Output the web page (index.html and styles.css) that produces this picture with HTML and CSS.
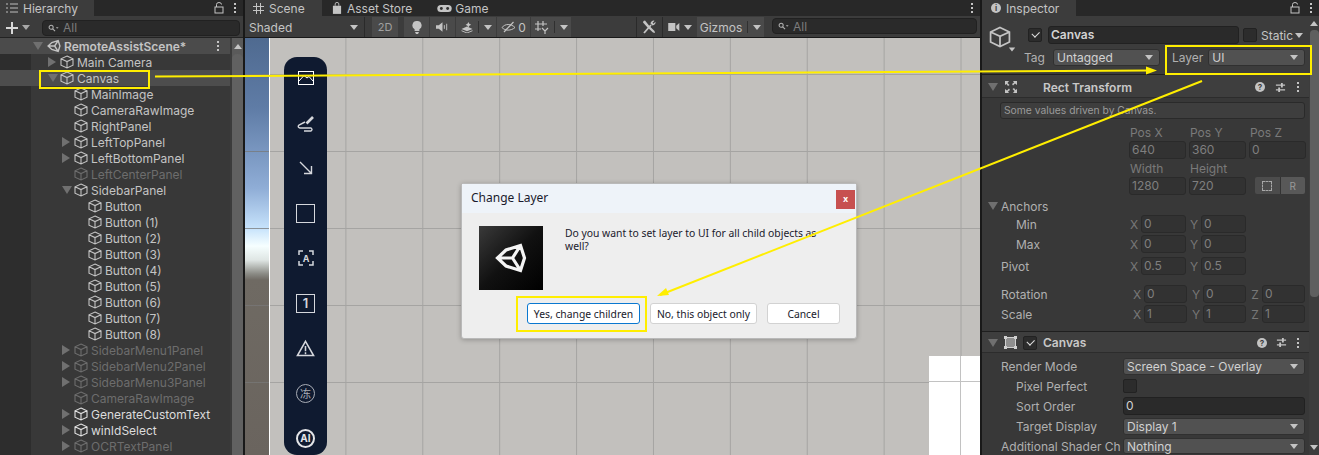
FILE: index.html
```html
<!DOCTYPE html>
<html lang="en">
<head>
    <meta charset="UTF-8">
    <title>Unity Editor - Change Layer</title>
    <link rel="stylesheet" href="styles.css">
</head>
<body>
    <svg width="0" height="0" class="defs">
        <symbol id="cube" viewBox="0 0 14 14">
            <path d="M7 1 L13 3.8 V10.2 L7 13 L1 10.2 V3.8 Z M1 3.8 L7 6.6 L13 3.8 M7 6.6 V13" fill="none" stroke="currentColor" stroke-width="1.1"/>
        </symbol>
        <symbol id="unity" viewBox="0 0 32 32">
            <path d="M2.5 16 L11 8 L25.5 3.5 L29.5 16 L25.5 28.5 L11 24 Z M2.5 16 H17.5 L25.5 3.5 M17.5 16 L25.5 28.5" fill="none" stroke="currentColor" stroke-width="3.2" stroke-linejoin="miter"/>
        </symbol>
        <symbol id="sliders" viewBox="0 0 12 12">
            <path d="M1 3.5 H11 M1 8.5 H11" stroke="currentColor" stroke-width="1.4"/>
            <path d="M7.5 1 V6 M4.5 6 V11" stroke="currentColor" stroke-width="2"/>
        </symbol>
        <symbol id="search" viewBox="0 0 14 10">
            <circle cx="4" cy="4" r="2.6" fill="none" stroke="currentColor" stroke-width="1.3"/>
            <path d="M6 6 L9 9" stroke="currentColor" stroke-width="1.4"/>
            <path d="M10 4 H13.5 L11.7 6 Z" fill="currentColor"/>
        </symbol>
    </svg>

    <div class="editor">
        <!-- hierarchy -->
        <section class="hierarchy">
            <div class="tabbar">
                <div class="tab hier-tab">
                    <svg class="tab-icon" viewBox="0 0 12 10" width="12" height="10"><path d="M0 1h2M0 5h2M0 9h2M4 1h8M4 5h8M4 9h8" stroke="#bdbdbd" stroke-width="1"/></svg>
                    <span>Hierarchy</span>
                </div>
                <div class="tab-tools">
                    <svg viewBox="0 0 10 12" width="10" height="12"><rect x="1" y="5" width="8" height="6" fill="none" stroke="#c4c4c4"/><path d="M2.5 5V2.5a2.5 2 0 0 1 5 0" fill="none" stroke="#c4c4c4"/></svg>
                    <span class="dots"></span>
                </div>
            </div>
            <div class="hier-toolbar">
                <svg class="plus" viewBox="0 0 12 12" width="12" height="12"><path d="M6 0V12M0 6H12" stroke="#d8d8d8" stroke-width="2"/></svg>
                <span class="arrow-down grey"></span>
                <div class="search wide">
                    <svg width="11" height="8"><use href="#search"/></svg><span>All</span>
                </div>
            </div>
            <div class="hier-body">
                <div class="tree" id="tree"></div>
                <div class="hier-scroll">
                    <span class="arrow-up"></span>
                    <div class="thumb"></div>
                </div>
            </div>
        </section>

        <!-- scene -->
        <section class="scene">
            <div class="tabbar scene-tabs">
                <div class="tab scene-tab">
                    <svg viewBox="0 0 11 11" width="11" height="11"><path d="M3.5 0V11M7.5 0V11M0 3.5H11M0 7.5H11" stroke="#c4c4c4" stroke-width="1"/></svg>
                    <span>Scene</span>
                </div>
                <div class="tab plain">
                    <svg viewBox="0 0 11 13" width="10" height="12"><path d="M1 4H10V13H1Z" fill="#c4c4c4"/><path d="M3.5 4V2a2 1.6 0 0 1 4 0V4" fill="none" stroke="#c4c4c4"/></svg>
                    <span>Asset Store</span>
                </div>
                <div class="tab plain game-tab">
                    <svg viewBox="0 0 16 10" width="15" height="9"><rect x="0" y="1" width="16" height="8" rx="4" fill="#c4c4c4"/><circle cx="4.5" cy="5" r="1.6" fill="#303030"/><circle cx="11.5" cy="5" r="1.6" fill="#303030"/></svg>
                    <span>Game</span>
                </div>
                <div class="tab-tools"><span class="dots"></span></div>
            </div>
            <div class="scene-toolbar">
                <div class="tb-cell shaded"><span>Shaded</span><span class="arrow-down"></span></div>
                <div class="tb-cell btn two-d">2D</div>
                <div class="tb-cell btn icon-cell">
                    <svg viewBox="0 0 10 13" width="10" height="13"><path d="M5 0a4.4 4.4 0 0 1 2.4 8.2V10H2.6V8.2A4.4 4.4 0 0 1 5 0ZM3 11H7L6 13H4Z" fill="#c4c4c4"/></svg>
                </div>
                <div class="tb-cell btn icon-cell">
                    <svg viewBox="0 0 14 10" width="13" height="10"><path d="M0 3H3L7 0V10L3 7H0Z" fill="#c4c4c4"/><path d="M9 3V7M11.5 1.5V8.5" stroke="#c4c4c4"/></svg>
                </div>
                <div class="tb-cell btn fx-cell">
                    <svg viewBox="0 0 13 12" width="12" height="11"><path d="M6.5 5L12.5 7.5 6.5 10 .5 7.5Z" fill="#c4c4c4"/><path d="M8 0L9 2 11 3 9 4 8 6 7 4 5 3 7 2Z" fill="#c4c4c4"/><path d="M.5 9.5L6.5 12 12.5 9.5" fill="none" stroke="#c4c4c4"/></svg>
                    <i class="sep"></i><span class="arrow-down"></span>
                </div>
                <div class="tb-cell btn vis-cell">
                    <svg viewBox="0 0 15 12" width="15" height="12"><path d="M1 6.5C4 2.5 10 2.5 14 6.5 10 10 4 10 1 6.5Z" fill="none" stroke="#c4c4c4"/><path d="M3 11L12.5 1" stroke="#c4c4c4" stroke-width="1.2"/></svg>
                    <span>0</span>
                </div>
                <div class="tb-cell btn grid-cell">
                    <svg viewBox="0 0 14 13" width="14" height="13"><path d="M3 0V10M8 0V5M0 3H12M0 8H6" stroke="#c4c4c4" stroke-width="1.2"/><path d="M7 7L10 10V13M13 7L10 10" fill="none" stroke="#c4c4c4" stroke-width="1.2"/></svg>
                    <i class="sep"></i><span class="arrow-down"></span>
                </div>
                <div class="tb-fill"></div>
                <div class="tb-cell btn tools-cell">
                    <svg viewBox="0 0 14 14" width="14" height="14"><path d="M9 5L2 13" stroke="#c4c4c4" stroke-width="1.8"/><path d="M8.5 3.5A3 3 0 0 1 12.5 .8L10.6 2.7 11.6 3.7 13.4 1.8A3 3 0 0 1 10.5 5.5Z" fill="#c4c4c4"/><path d="M1.5 1L3 .5 7 5.5 12.5 11 13 13 11 12.5 5.5 7.5 1 2.5Z" fill="#c4c4c4"/></svg>
                </div>
                <div class="tb-cell btn cam-cell">
                    <svg viewBox="0 0 13 9" width="12" height="8"><rect width="8" height="9" fill="#c4c4c4"/><path d="M9 3L12.5 0V9L9 6Z" fill="#c4c4c4"/></svg>
                    <span class="arrow-down"></span>
                </div>
                <div class="tb-cell gizmos">
                    <span>Gizmos</span><i class="sep"></i><span class="arrow-down"></span>
                </div>
                <div class="search scene-search">
                    <svg width="11" height="8"><use href="#search"/></svg><span>All</span>
                </div>
            </div>
            <div class="viewport">
                <div class="sky"></div>
                <div class="white-corner"></div>

                <div class="sidebar">
                    <div class="slot"><svg viewBox="0 0 16 14" width="16" height="14"><rect x=".5" y=".5" width="15" height="13" fill="none" stroke="#fff"/><path d="M1 10L6 4.5 9 7 11 5.5 15 10" fill="none" stroke="#fff"/></svg></div>
                    <div class="slot"><svg viewBox="0 0 17 17" width="17" height="17"><path d="M16 2L9.5 8.5" stroke="#d5d7dc" stroke-width="2.6"/><path d="M8 7L2 10Q0 12 3 13H14Q16 14.5 14 16H7" fill="none" stroke="#d5d7dc" stroke-width="1.4"/></svg></div>
                    <div class="slot"><svg viewBox="0 0 14 14" width="14" height="14"><path d="M1 1L12.5 12.5M12.5 5V12.5H5" fill="none" stroke="#d5d7dc" stroke-width="1.4"/></svg></div>
                    <div class="slot"><div class="square"></div></div>
                    <div class="slot"><svg viewBox="0 0 16 16" width="16" height="16"><path d="M1 5V1H5M11 1H15V5M1 11V15H5M11 15H15V11" fill="none" stroke="#d5d7dc" stroke-width="1.5"/><text x="8" y="12" text-anchor="middle" class="ocr-a">A</text></svg></div>
                    <div class="slot"><div class="square small-one">1</div></div>
                    <div class="slot"><svg viewBox="0 0 20 18" width="19" height="18"><path d="M10 2L18.5 17H1.5Z" fill="none" stroke="#d5d7dc" stroke-width="1.6"/><path d="M10 7V12.5M10 13.5V15.5" stroke="#d5d7dc" stroke-width="1.6"/></svg></div>
                    <div class="slot"><div class="freeze">冻</div></div>
                    <div class="slot last-slot"><div class="ai">AI</div></div>
                </div>

                <div class="dialog">
                    <div class="dlg-title">
                        <span>Change Layer</span>
                        <div class="dlg-close">x</div>
                    </div>
                    <div class="dlg-body">
                        <div class="dlg-logo">
                            <svg viewBox="0 0 32 32" width="32" height="32"><use href="#unity"/></svg>
                        </div>
                        <p>Do you want to set layer to UI for all child objects as well?</p>
                    </div>
                    <div class="dlg-buttons">
                        <button class="primary">Yes, change children</button>
                        <button class="no">No, this object only</button>
                        <button class="cancel">Cancel</button>
                    </div>
                </div>
            </div>
        </section>

        <!-- inspector -->
        <section class="inspector">
            <div class="tabbar">
                <div class="tab insp-tab">
                    <span class="info">i</span><span>Inspector</span>
                </div>
                <div class="tab-tools">
                    <svg viewBox="0 0 10 12" width="10" height="12"><rect x="1" y="5" width="8" height="6" fill="none" stroke="#c4c4c4"/><path d="M2.5 5V2.5a2.5 2 0 0 1 5 0" fill="none" stroke="#c4c4c4"/></svg>
                    <span class="dots"></span>
                </div>
            </div>
            <div class="insp-scrollwrap">
                <div class="insp-main">
                    <div class="go-header">
                        <div class="go-icon">
                            <svg width="22" height="22" class="big-cube"><use href="#cube"/></svg>
                            <span class="arrow-down tiny"></span>
                        </div>
                        <div class="go-fields">
                            <div class="go-row1">
                                <span class="check on"></span>
                                <div class="field name-field">Canvas</div>
                                <span class="check"></span>
                                <span class="static">Static</span><span class="arrow-down"></span>
                            </div>
                            <div class="go-row2">
                                <span class="lbl tag-lbl">Tag</span>
                                <div class="drop tag-drop"><span>Untagged</span><span class="arrow-down"></span></div>
                                <span class="lbl layer-lbl">Layer</span>
                                <div class="drop layer-drop"><span>UI</span><span class="arrow-down"></span></div>
                            </div>
                        </div>
                    </div>

                    <div class="comp-head rect-head">
                        <span class="arrow-down big dim"></span>
                        <svg viewBox="0 0 12 12" width="12" height="12"><path d="M0 0H4L2.5 2 4.5 4 3 5 1.5 3 0 4ZM12 0V4L10 2.5 8 4.5 7 3 9 1.5 8 0ZM0 12V8L2 9.5 4 7.5 5 9 3 10.5 4 12ZM12 12H8L9.5 10 7.5 8 9 7 10.5 9 12 8Z" fill="#c4c4c4"/></svg>
                        <b class="rect-title">Rect Transform</b>
                        <span class="help">?</span>
                        <svg width="11" height="11"><use href="#sliders"/></svg>
                        <span class="dots"></span>
                    </div>
                    <div class="driven">Some values driven by Canvas.</div>

                    <div class="pos-grid">
                        <span class="cap">Pos X</span><span class="cap">Pos Y</span><span class="cap">Pos Z</span>
                        <div class="num">640</div><div class="num">360</div><div class="num">0</div>
                        <span class="cap">Width</span><span class="cap">Height</span><span></span>
                        <div class="num">1280</div><div class="num">720</div>
                        <div class="blueprint"><span class="bp-a"><i></i></span><span class="bp-b">R</span></div>
                    </div>

                    <div class="row anchors"><span class="arrow-down big dim"></span><span>Anchors</span></div>
                    <div class="row xy min-row"><span class="indent">Min</span><em>X</em><div class="num">0</div><em>Y</em><div class="num">0</div></div>
                    <div class="row xy"><span class="indent">Max</span><em>X</em><div class="num">0</div><em>Y</em><div class="num">0</div></div>
                    <div class="row xy pivot"><span>Pivot</span><em>X</em><div class="num">0.5</div><em>Y</em><div class="num">0.5</div></div>
                    <div class="row xyz rotation"><span>Rotation</span><em>X</em><div class="num">0</div><em>Y</em><div class="num">0</div><em>Z</em><div class="num">0</div></div>
                    <div class="row xyz"><span>Scale</span><em>X</em><div class="num">1</div><em>Y</em><div class="num">1</div><em>Z</em><div class="num">1</div></div>

                    <div class="comp-head canvas-head">
                        <span class="arrow-down big dim"></span>
                        <svg viewBox="0 0 13 13" width="13" height="13"><rect x="1.5" y="1.5" width="10" height="10" fill="#8f8f8f" stroke="#d0d0d0"/><path d="M0 0H3V3H0ZM10 0H13V3H10ZM0 10H3V13H0ZM10 10H13V13H10Z" fill="#d0d0d0"/></svg>
                        <span class="check on"></span>
                        <b>Canvas</b>
                        <span class="help">?</span>
                        <svg width="11" height="11"><use href="#sliders"/></svg>
                        <span class="dots"></span>
                    </div>

                    <div class="row wide"><span>Render Mode</span><div class="drop"><span>Screen Space - Overlay</span><span class="arrow-down"></span></div></div>
                    <div class="row wide"><span class="indent">Pixel Perfect</span><span class="check"></span></div>
                    <div class="row wide"><span class="indent">Sort Order</span><div class="field order">0</div></div>
                    <div class="row wide"><span class="indent">Target Display</span><div class="drop"><span>Display 1</span><span class="arrow-down"></span></div></div>
                    <div class="row wide last-row"><span>Additional Shader Ch</span><div class="drop"><span>Nothing</span><span class="arrow-down"></span></div></div>
                </div>
                <div class="insp-scroll">
                    <span class="arrow-up"></span>
                    <div class="thumb"></div>
                    <span class="arrow-down scroll-down"></span>
                </div>
            </div>
        </section>
    </div>

    <!-- annotations drawn over the screenshot -->
    <div class="mark mark-canvas"></div>
    <div class="mark mark-layer"></div>
    <div class="mark mark-yes"></div>
    <svg class="annot" viewBox="0 0 1319 455" width="1319" height="455">
        <path d="M155 76.5 L1150 70.5" stroke="#ffee00" stroke-width="2" fill="none"/>
        <path d="M1157 70.5 L1146 66.5 L1146 74.5 Z" fill="#ffee00"/>
        <path d="M1202 81 L660 295" stroke="#ffee00" stroke-width="2" fill="none"/>
        <path d="M657 296 L666 288 L669 295 Z" fill="#ffee00"/>
    </svg>

    <script>
        // name, depth, arrow (r/d/none), state
        const rows = [
            ['Main Camera', 1, 'r', ''],
            ['Canvas', 1, 'd', 'sel'],
            ['MainImage', 2, '', ''],
            ['CameraRawImage', 2, '', ''],
            ['RightPanel', 2, '', ''],
            ['LeftTopPanel', 2, 'r', ''],
            ['LeftBottomPanel', 2, 'r', ''],
            ['LeftCenterPanel', 2, '', 'off'],
            ['SidebarPanel', 2, 'd', ''],
            ['Button', 3, '', ''],
            ['Button (1)', 3, '', ''],
            ['Button (2)', 3, '', ''],
            ['Button (3)', 3, '', ''],
            ['Button (4)', 3, '', ''],
            ['Button (5)', 3, '', ''],
            ['Button (6)', 3, '', ''],
            ['Button (7)', 3, '', ''],
            ['Button (8)', 3, '', ''],
            ['SidebarMenu1Panel', 2, 'r', 'off'],
            ['SidebarMenu2Panel', 2, 'r', 'off'],
            ['SidebarMenu3Panel', 2, 'r', 'off'],
            ['CameraRawImage', 2, '', 'off'],
            ['GenerateCustomText', 2, 'r', 'hi'],
            ['winIdSelect', 2, 'r', 'hi'],
            ['OCRTextPanel', 2, 'r', 'off']
        ];

        const tree = document.getElementById('tree');
        tree.innerHTML = `<div class="node scene-node">
            <span class="tw arrow-down big dim"></span>
            <svg width="14" height="14" class="cube"><use href="#unity"/></svg>
            <b>RemoteAssistScene*</b><span class="dots"></span></div>`;

        rows.forEach(([name, depth, arrow, state]) => {
            const tw = arrow === 'r' ? 'tw arrow-right' : arrow === 'd' ? 'tw arrow-down big dim' : 'tw';
            tree.innerHTML += `<div class="node d${depth} ${state}">
                <span class="${tw}"></span>
                <svg width="14" height="14" class="cube"><use href="#cube"/></svg>
                <span class="name">${name}</span></div>`;
        });
    </script>
</body>
</html>
```

FILE: styles.css
```css
* {
    box-sizing: border-box;
}
html, body {
    margin: 0;
    width: 1319px;
    height: 455px;
    overflow: hidden;
    background: #191919;
}
body {
    position: relative;
    font-family: Inter, "Noto Sans", sans-serif;
    font-size: 12px;
    color: #c4c4c4;
}
.defs {
    position: absolute;
}
.editor {
    display: flex;
    height: 455px;
    gap: 2px;
}

/* shared bits */
.tabbar {
    display: flex;
    align-items: stretch;
    height: 16px;
    background: #282828;
}
.tab {
    display: flex;
    align-items: center;
    gap: 5px;
    padding-left: 6px;
    background: #3c3c3c;
    white-space: nowrap;
}
.tab-tools {
    margin-left: auto;
    display: flex;
    align-items: center;
    gap: 10px;
    padding-right: 7px;
}
.dots {
    display: inline-block;
    width: 2px;
    height: 2px;
    background: #c4c4c4;
    box-shadow: 0 -4px 0 #c4c4c4, 0 4px 0 #c4c4c4;
}
.arrow-down {
    display: inline-block;
    width: 0;
    height: 0;
    border-left: 4px solid transparent;
    border-right: 4px solid transparent;
    border-top: 5px solid #c4c4c4;
}
.arrow-down.big {
    border-left-width: 5px;
    border-right-width: 5px;
    border-top-width: 8px;
}
.arrow-down.dim {
    border-top-color: #707070;
}
.arrow-down.grey {
    border-top-color: #a8a8a8;
}
.arrow-up {
    display: block;
    width: 0;
    height: 0;
    border-left: 4px solid transparent;
    border-right: 4px solid transparent;
    border-bottom: 5px solid #c4c4c4;
}
.arrow-right {
    display: inline-block;
    width: 0;
    height: 0;
    border-top: 5px solid transparent;
    border-bottom: 5px solid transparent;
    border-left: 8px solid #707070;
}
.search {
    display: flex;
    align-items: center;
    gap: 4px;
    height: 16px;
    padding-left: 5px;
    background: #2a2a2a;
    border: 1px solid #212121;
    border-radius: 4px;
    color: #7c7c7c;
}
.search svg {
    color: #b0b0b0;
}

/* hierarchy */
.hierarchy {
    width: 243px;
    flex: none;
    display: flex;
    flex-direction: column;
    background: #383838;
}
.hier-tab {
    width: 94px;
}
.hier-toolbar {
    display: flex;
    align-items: center;
    height: 22px;
    padding: 2px 3px 0 6px;
    background: #3c3c3c;
    border-bottom: 1px solid #232323;
}
.plus {
    flex: none;
    margin-right: 4px;
}
.search.wide {
    flex: 1;
    margin-left: 12px;
}
.hier-body {
    flex: 1;
    display: flex;
    background: linear-gradient(to right, #2d2d2d 31px, #383838 31px);
    min-height: 0;
}
.tree {
    flex: 1;
    min-width: 0;
}
.node {
    display: flex;
    align-items: center;
    height: 16px;
    white-space: nowrap;
    position: relative;
}
.node .tw {
    flex: none;
    margin-right: 4px;
}
.name {
    margin-left: 3px;
}
.cube {
    flex: none;
    color: #c4c4c4;
}
.scene-node {
    background: #4b4b4b;
    padding-left: 33px;
    color: #c4c4c4;
}
.scene-node b {
    margin-left: 3px;
    font-weight: 600;
}
.scene-node .dots {
    position: absolute;
    right: 11px;
    top: 7px;
}
.node.d1 { padding-left: 48px; }
.node.d2 { padding-left: 62px; }
.node.d3 { padding-left: 76px; }
.node.d1 .tw, .node.d2 .tw, .node.d3 .tw {
    width: 8px;
}
.node.d1 .arrow-down.big, .node.d2 .arrow-down.big {
    width: 0;
    margin-right: 2px;
}
.node.sel {
    background: #4d4d4d;
}
.node.off {
    color: #6d6d6d;
}
.node.off .cube {
    color: #6d6d6d;
}
.node.hi {
    color: #dcdcdc;
}
.node.hi .cube {
    color: #e2e2e2;
}
.hier-scroll {
    width: 13px;
    flex: none;
    background: #5a5a5a;
    padding-top: 6px;
    padding-left: 2px;
    border-left: 2px solid #3c3c3c;
    position: relative;
}
.hier-scroll .thumb {
    position: absolute;
    left: 0;
    top: 16px;
    width: 11px;
    height: 401px;
    background: #616161;
    border-radius: 5px 5px 0 0;
}

/* scene */
.scene {
    width: 735px;
    flex: none;
    display: flex;
    flex-direction: column;
    position: relative;
}
.scene-tab {
    width: 77px;
    padding-left: 8px;
    background: #3c3c3c;
}
.tab.plain {
    background: none;
    padding-left: 10px;
    gap: 5px;
}
.tab.game-tab {
    padding-left: 25px;
    gap: 3px;
}
.scene-toolbar {
    display: flex;
    align-items: stretch;
    height: 22px;
    background: #3c3c3c;
    border-bottom: 1px solid #191919;
    gap: 1px;
    padding-top: 1px;
}
.tb-cell {
    display: flex;
    align-items: center;
    justify-content: center;
    background: #3c3c3c;
    border-right: 1px solid #2a2a2a;
}
.tb-cell.btn {
    background: #4a4a4a;
    border: none;
}
.shaded {
    width: 120px;
    justify-content: space-between;
    padding: 0 6px 0 4px;
}
.two-d {
    width: 26px;
    margin-left: 6px;
    color: #a0a0a0;
    font-size: 11px;
}
.icon-cell {
    width: 25px;
}
.two-d + .icon-cell {
    margin-left: 5px;
}
.fx-cell {
    width: 40px;
    gap: 5px;
}
.vis-cell {
    width: 33px;
    gap: 2px;
}
.grid-cell {
    width: 40px;
    gap: 5px;
}
.sep {
    width: 1px;
    height: 12px;
    background: #303030;
}
.tb-fill {
    flex: 1;
}
.tools-cell {
    width: 25px;
    background: #3c3c3c !important;
    border-left: 1px solid #2a2a2a !important;
}
.cam-cell {
    width: 34px;
    gap: 4px;
    background: #3c3c3c !important;
    border-left: 1px solid #2a2a2a !important;
}
.gizmos {
    width: 67px;
    background: #4a4a4a;
    gap: 5px;
    border: none;
}
.scene-search {
    width: 205px;
    margin: 1px 3px 0 7px;
    flex: none;
}
.viewport {
    flex: 1;
    position: relative;
    overflow: hidden;
    background-color: #c2c0bd;
    background-image:
        linear-gradient(to right, #a5a4a2 1px, transparent 1px),
        linear-gradient(to bottom, #a5a4a2 1px, transparent 1px);
    background-size: 76.9px 77px;
    background-position: 23.5px 36px;
}
.sky {
    position: absolute;
    left: 0;
    top: 0;
    width: 25px;
    height: 100%;
    border-right: 1px solid #fff;
    background-image:
        linear-gradient(to bottom, rgba(120,120,120,0.75) 1px, transparent 1px),
        linear-gradient(to bottom, #4f6a90 0, #5f7ca6 70px, #8fadd6 150px, #c6e2fb 190px, #f6ffff 208px, #dfe6e4 222px, #8a8a84 236px, #6f6a63 242px, #6a645e 100%);
    background-size: 100% 77px, 100% 100%;
    background-position: 0 36px, 0 0;
    background-repeat: repeat-y, no-repeat;
}
.white-corner {
    position: absolute;
    right: 0;
    bottom: 0;
    width: 51px;
    height: 99px;
    background-color: #fff;
    background-image:
        linear-gradient(to right, #c2c2c2 1px, transparent 1px),
        linear-gradient(to bottom, #c2c2c2 1px, transparent 1px);
    background-size: 76.9px 77px;
    background-position: 31px 25px;
}
.sidebar {
    position: absolute;
    left: 39px;
    top: 19px;
    width: 43px;
    height: 398px;
    border-radius: 13px;
    background: #0f1a30;
    display: flex;
    flex-direction: column;
    align-items: center;
}
.slot {
    height: 45px;
    flex: none;
    display: flex;
    align-items: center;
    justify-content: center;
}
.slot:first-child {
    margin-top: -1.5px;
}
.last-slot {
    height: 39px;
    align-items: flex-start;
    padding-top: 13px;
}
.square {
    width: 19px;
    height: 19px;
    border: 1px solid #d5d7dc;
}
.small-one {
    font-size: 13px;
    line-height: 17px;
    text-align: center;
    color: #d5d7dc;
    font-weight: 600;
}
.ocr-a {
    font: 700 9px Inter, sans-serif;
    fill: #d5d7dc;
}
.freeze {
    width: 19px;
    height: 19px;
    border: 1px solid #a8acb5;
    border-radius: 50%;
    color: #a8acb5;
    font: 11px/17px "Noto Sans CJK SC", sans-serif;
    text-align: center;
}
.ai {
    width: 19px;
    height: 19px;
    border: 2px solid #e4e5e8;
    border-radius: 50%;
    color: #e4e5e8;
    font: 700 10px/15px Inter, sans-serif;
    text-align: center;
}

/* dialog */
.dialog {
    position: absolute;
    left: 216px;
    top: 145px;
    width: 396px;
    height: 156px;
    background: #eeeeee;
    border: 1px solid #b9b9b9;
    border-radius: 3px;
    box-shadow: 0 1px 5px rgba(0,0,0,0.25);
    font-family: "Noto Sans", "Open Sans", sans-serif;
    font-size: 10.35px;
    color: #1a1a2c;
}
.dlg-title {
    display: flex;
    justify-content: space-between;
    height: 29px;
    padding: 5px 1px 0 9px;
    background: #eef3f9;
    font-size: 12px;
}
.dlg-close {
    width: 19px;
    height: 19px;
    margin-top: 1px;
    background: #c75050;
    color: #fff;
    font: 700 9px/18px Inter, sans-serif;
    text-align: center;
}
.dlg-body {
    display: flex;
    height: 89px;
    padding: 13px 26px 0 17px;
    gap: 22px;
}
.dlg-logo {
    width: 64px;
    height: 64px;
    flex: none;
    display: flex;
    align-items: center;
    justify-content: center;
    color: #f4f4f4;
    background: linear-gradient(135deg, #3a3a3a 0, #111 50%, #000 100%);
}
.dlg-body p {
    margin: 1px 0 0;
    line-height: 13px;
}
.dlg-buttons {
    display: flex;
    margin-top: 1px;
    padding-left: 65px;
}
.dlg-buttons button {
    height: 21px;
    padding: 0;
    font: inherit;
    color: #1a1a2c;
    background: #fff;
    border: 1px solid #d2d2d2;
    border-radius: 3px;
}
.primary {
    width: 113px;
    border-color: #0a78d0 !important;
}
.no {
    width: 107px;
    margin-left: 10px;
}
.cancel {
    width: 73px;
    margin-left: 10px;
}

/* inspector */
.inspector {
    flex: 1;
    display: flex;
    flex-direction: column;
    background: #383838;
    min-width: 0;
}
.insp-tab {
    width: 94px;
    padding-left: 9px;
}
.info {
    width: 10px;
    height: 10px;
    border-radius: 50%;
    background: #c4c4c4;
    color: #3c3c3c;
    font: 700 8px/10px Inter, sans-serif;
    text-align: center;
}
.insp-scrollwrap {
    flex: 1;
    display: flex;
    min-height: 0;
}
.insp-main {
    flex: 1;
    min-width: 0;
    overflow: hidden;
}
.go-header {
    display: flex;
    height: 59px;
    background: #3c3c3c;
    border-bottom: 1px solid #1f1f1f;
}
.go-icon {
    width: 46px;
    position: relative;
    padding: 10px 0 0 7px;
    flex: none;
}
.big-cube {
    color: #c4c4c4;
}
.tiny {
    position: absolute;
    left: 26px;
    top: 31px;
    transform: scale(.8);
}
.go-fields {
    flex: 1;
    padding-top: 11px;
}
.go-row1 {
    display: flex;
    align-items: center;
    height: 16px;
}
.check {
    display: inline-block;
    width: 14px;
    height: 14px;
    background: #2c2c2c;
    border: 1px solid #222;
    border-radius: 2px;
    flex: none;
    position: relative;
}
.check.on::after {
    content: "";
    position: absolute;
    left: 3px;
    top: 2px;
    width: 6px;
    height: 3.5px;
    border-left: 1.4px solid #e0e0e0;
    border-bottom: 1.4px solid #e0e0e0;
    transform: rotate(-45deg);
}
.field {
    background: #2a2a2a;
    border: 1px solid #212121;
    border-radius: 3px;
    color: #d2d2d2;
    padding-left: 2px;
    height: 18px;
    line-height: 16px;
}
.name-field {
    width: 191px;
    margin: 0 4px 0 6px;
    font-weight: 600;
}
.static {
    margin-left: 4px;
    margin-right: 2px;
}
.go-row2 {
    display: flex;
    align-items: center;
    margin-top: 6px;
}
.lbl {
    color: #b0b0b0;
}
.tag-lbl {
    margin-left: -4px;
}
.drop {
    display: flex;
    align-items: center;
    justify-content: space-between;
    height: 17px;
    padding: 0 6px 0 3px;
    background: #515151;
    border: 1px solid #303030;
    border-radius: 3px;
    color: #d2d2d2;
}
.tag-drop {
    width: 107px;
    margin: 0 0 0 8px;
}
.layer-lbl {
    margin-left: 12px;
}
.layer-drop {
    width: 97px;
    margin-left: 5px;
}
.comp-head {
    display: flex;
    align-items: center;
    height: 21px;
    gap: 7px;
    padding-left: 6px;
    padding-right: 10px;
    background: #3e3e3e;
    border-bottom: 1px solid #2c2c2c;
}
.rect-head {
    height: 23px;
    padding-top: 2px;
}
.comp-head b {
    font-weight: 600;
    margin-right: auto;
    color: #c8c8c8;
}
.rect-title {
    margin-left: 19px;
}
.help {
    width: 10px;
    height: 10px;
    border-radius: 50%;
    background: #c4c4c4;
    color: #3c3c3c;
    font: 700 8px/10px Inter, sans-serif;
    text-align: center;
    margin-right: 3px;
}
.comp-head svg + .dots {
    margin-left: 4px;
}
.driven {
    margin: 4px 4px 0 18px;
    height: 17px;
    padding-left: 3px;
    line-height: 15px;
    background: #3e3e3e;
    border: 1px solid #2a2a2a;
    border-radius: 3px;
    font-size: 10.3px;
    color: #9a9a9a;
}
.pos-grid {
    display: grid;
    grid-template-columns: 57px 57px 57px;
    grid-template-rows: 17px 19px 17px 19px;
    column-gap: 3px;
    margin: 5px 0 0 147px;
    color: #7a7a7a;
}
.cap {
    font-size: 12px;
    line-height: 17px;
    padding-left: 1px;
}
.num {
    height: 18px;
    background: #323232;
    border: 1px solid #2a2a2a;
    border-radius: 3px;
    padding-left: 2px;
    color: #7f7f7f;
    line-height: 16px;
}
.blueprint {
    display: flex;
    width: 50px;
    height: 17px;
    margin-left: 6px;
    border-radius: 2px;
    overflow: hidden;
}
.bp-a, .bp-b {
    flex: 1;
    background: #585858;
    display: flex;
    align-items: center;
    justify-content: center;
    color: #9a9a9a;
    font-size: 10px;
}
.bp-a {
    background: #4c4c4c;
    border-right: 1px solid #333;
}
.bp-a i {
    width: 10px;
    height: 10px;
    border: 1px dashed #a8a8a8;
}
.row {
    display: flex;
    align-items: center;
    height: 20px;
    padding-left: 19px;
    color: #b0b0b0;
    white-space: nowrap;
}
.row > span:first-child {
    flex: none;
}
.row em {
    font-style: normal;
    color: #777;
    width: 10px;
    text-align: center;
}
.anchors {
    padding-left: 6px;
    gap: 3px;
    margin-top: 1px;
    height: 18px;
}
.min-row {
    margin-top: -1px;
}
.indent {
    padding-left: 15px;
}
.xy > span:first-child {
    width: 128px;
}
.xy .num {
    width: 45px;
    margin: 0 1px 0 2px;
}
.xy .num + em {
    margin-left: 2px;
}
.xyz > span:first-child {
    width: 131px;
}
.xyz .num {
    width: 42.5px;
    margin-left: 2px;
}
.xyz .num + em {
    margin-left: 4.5px;
}
.pivot {
    margin-top: 2px;
}
.rotation {
    margin-top: 8px;
}
.canvas-head {
    margin-top: 7px;
    margin-bottom: 3px;
    border-top: 1px solid #1f1f1f;
    gap: 6px;
    height: 22px;
    padding-top: 1px;
}
.wide > span:first-child {
    width: 122px;
}
.wide .drop, .wide .order {
    flex: 1;
    margin-right: 4px;
}
.last-row {
    height: 18px;
    padding-top: 2px;
}
.last-row .drop {
    height: 16px;
}
.insp-scroll {
    width: 10px;
    flex: none;
    background: #3c3c3c;
    position: relative;
    padding: 5px 0 0 1px;
}
.insp-scroll .thumb {
    position: absolute;
    left: 1px;
    top: 14px;
    width: 9px;
    height: 267px;
    background: #5f5f5f;
    border-radius: 4px;
}
.scroll-down {
    position: absolute;
    left: 1px;
    bottom: 5px;
}

/* annotations */
.mark {
    position: absolute;
    border: 2px solid #ffee00;
}
.mark-canvas {
    left: 39px;
    top: 70px;
    width: 111px;
    height: 19px;
}
.mark-layer {
    left: 1165px;
    top: 45px;
    width: 147px;
    height: 30px;
}
.mark-yes {
    left: 516px;
    top: 296px;
    width: 131px;
    height: 36px;
}
.annot {
    position: absolute;
    left: 0;
    top: 0;
    pointer-events: none;
}
```
